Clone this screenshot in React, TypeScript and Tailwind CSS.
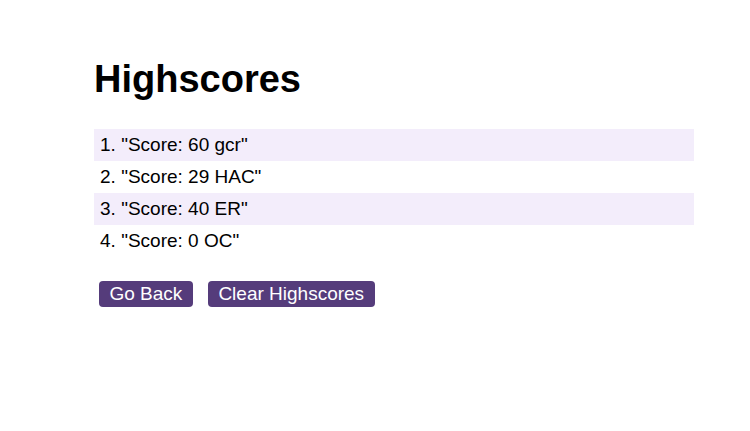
export default function App() {
  const scores = ['"Score: 60 gcr"', '"Score: 29 HAC"', '"Score: 40 ER"', '"Score: 0 OC"']

  return (
    <div className="min-h-[431px] bg-white font-['Liberation_Sans',Arial,sans-serif] text-black">
      <div className="ml-[94px] w-[600px] pt-[57px]">
        <h1 className="text-[38px] font-bold leading-[44px]">Highscores</h1>

        {/* Score list */}
        <ol className="mt-[28px]">
          {scores.map((s, i) => (
            <li
              key={i}
              className={`flex h-[32px] items-center pl-[6px] text-[19px] ${
                i % 2 === 0 ? 'bg-[#f3edfb]' : 'bg-white'
              }`}
            >
              {i + 1}. {s}
            </li>
          ))}
        </ol>

        <div className="mt-[24px] flex gap-[15px] pl-[5px]">
          <button className="h-[26px] rounded-[4px] bg-[#553c7b] px-[10.5px] text-[19px] leading-[22px] text-white">
            Go Back
          </button>
          <button className="h-[26px] rounded-[4px] bg-[#553c7b] px-[10.5px] text-[19px] leading-[22px] text-white">
            Clear Highscores
          </button>
        </div>
      </div>
    </div>
  )
}
